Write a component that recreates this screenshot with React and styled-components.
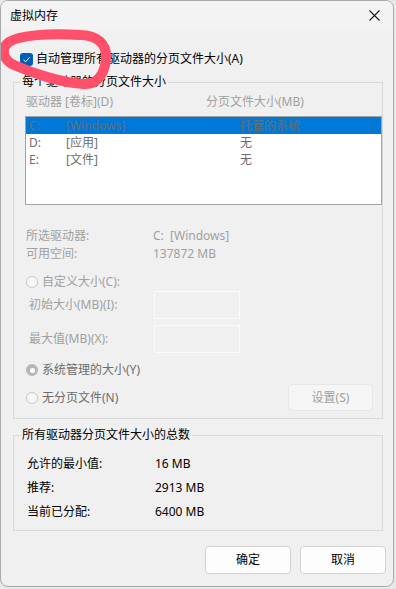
import React from "react";
import styled, { createGlobalStyle } from "styled-components";

const Global = createGlobalStyle`
  html, body { margin: 0; padding: 0; background: #e8e8e8; }
  body { font-family: "Noto Sans", "Noto Sans CJK SC", sans-serif; font-size: 12px; color: #000; }
  * { box-sizing: border-box; }
`;

const Window = styled.div`
  position: relative;
  width: 394px;
  height: 587px;
  background: #f0f0f0;
  border: 1px solid #a9a9a9;
  border-radius: 8px;
  overflow: hidden;
  display: flex;
  flex-direction: column;
`;

const TitleBar = styled.div`
  height: 30px;
  background: #f3f3f3;
  display: flex;
  align-items: center;
  justify-content: space-between;
  padding: 0 8px 0 9px;
  line-height: 16px;
`;

const CloseBtn = styled.div`
  width: 22px;
  height: 22px;
  display: flex;
  align-items: center;
  justify-content: center;
  margin-top: -2px;
`;

const Body = styled.div`
  padding: 0 10px 0 12px;
  display: flex;
  flex-direction: column;
`;

const CheckRow = styled.label`
  display: flex;
  align-items: center;
  height: 16px;
  line-height: 16px;
  margin-top: 20px;
  padding-left: 7px;
  gap: 3px;
`;

const CheckBox = styled.span`
  width: 13px;
  height: 13px;
  border-radius: 3px;
  background: #005fb8;
  display: flex;
  align-items: center;
  justify-content: center;
`;

const Group = styled.fieldset`
  margin: ${(p) => p.$mt}px 0 0 0;
  padding: 0;
  border: 1px solid #d9d9d9;
  min-width: 0;
`;

const Legend = styled.legend`
  margin-left: 6px;
  padding: 0 2px;
  line-height: 16px;
  color: #000;
`;

const Inner = styled.div`
  padding: ${(p) => p.$pad};
  display: flex;
  flex-direction: column;
`;

const Header = styled.div`
  display: flex;
  height: 16px;
  line-height: 16px;
  color: #a0a0a0;
  padding-left: 1px;
`;

const HeaderCell = styled.span`
  width: ${(p) => p.$w}px;
`;

const List = styled.div`
  margin-top: 6px;
  height: 89px;
  border: 1px solid #a3a3a3;
  background: #fff;
`;

const ListRow = styled.div`
  display: flex;
  height: 17px;
  line-height: 17px;
  color: #6d6d6d;
  background: ${(p) => (p.$sel ? "#0078d7" : "transparent")};
  padding-left: 3px;
`;

const Cell = styled.span`
  width: ${(p) => p.$w}px;
  flex: none;
`;

const InfoRow = styled.div`
  display: flex;
  height: 18px;
  line-height: 18px;
  color: #a0a0a0;
  margin-top: ${(p) => p.$mt || 0}px;
  padding-left: 1px;
`;

const InfoLabel = styled.span`
  width: 127px;
`;

const RadioRow = styled.div`
  display: flex;
  align-items: center;
  justify-content: space-between;
  min-height: 16px;
  margin-top: ${(p) => p.$mt}px;
  padding-right: ${(p) => p.$pr || 0}px;
`;

const RadioLabel = styled.span`
  display: flex;
  align-items: center;
  gap: 4px;
  line-height: 16px;
  color: ${(p) => (p.$dim ? "#a0a0a0" : "#6d6d6d")};
  padding-left: 1px;
`;

const RadioDot = styled.span`
  width: 12px;
  height: 12px;
  border-radius: 50%;
  border: 1px solid ${(p) => (p.$on ? "#b7b7b7" : "#c8c8c8")};
  background: ${(p) => (p.$on ? "#b7b7b7" : "#f7f7f7")};
  display: flex;
  align-items: center;
  justify-content: center;
  &::after {
    content: "";
    display: ${(p) => (p.$on ? "block" : "none")};
    width: 5px;
    height: 5px;
    border-radius: 50%;
    background: #fff;
  }
`;

const SizeRow = styled.div`
  display: flex;
  align-items: center;
  margin-top: ${(p) => p.$mt}px;
  color: #a0a0a0;
  padding-left: 4px;
  line-height: 16px;
`;

const SizeLabel = styled.span`
  width: 125px;
`;

const SizeBox = styled.div`
  width: 86px;
  height: 28px;
  border: 1px solid #fbfbfb;
  background: #f0f0f0;
`;

const Button = styled.button`
  width: ${(p) => p.$w || 86}px;
  height: ${(p) => p.$h || 28}px;
  border-radius: 4px;
  font-family: inherit;
  font-size: 12px;
  padding: 0;
  border: 1px solid ${(p) => (p.$disabled ? "#e6e6e6" : "#d2d2d2")};
  background: ${(p) => (p.$disabled ? "#f5f5f5" : "#fdfdfd")};
  color: ${(p) => (p.$disabled ? "#a0a0a0" : "#000")};
  line-height: 16px;
`;

const TotalRow = styled.div`
  display: flex;
  height: 24px;
  line-height: 24px;
  color: #000;
`;

const TotalLabel = styled.span`
  width: 128px;
`;

const Footer = styled.div`
  display: flex;
  justify-content: flex-end;
  gap: 9px;
  margin-top: 15px;
  padding-right: 7px;
`;

const Annotation = styled.svg`
  position: absolute;
  left: -1px;
  top: -1px;
  pointer-events: none;
`;

export default function App() {
  return (
    <>
      <Global />
      <Window>
        <TitleBar>
          <span>虚拟内存</span>
          <CloseBtn>
            <svg width="11" height="11" viewBox="0 0 11 11">
              <path d="M0.5 0.5 L10.5 10.5 M10.5 0.5 L0.5 10.5" stroke="#1a1a1a" strokeWidth="1.1" />
            </svg>
          </CloseBtn>
        </TitleBar>
        <Body>
          <CheckRow>
            <CheckBox>
              <svg width="9" height="9" viewBox="0 0 9 9">
                <path d="M1.5 4.8 L3.6 6.8 L7.6 2.3" stroke="#fff" strokeWidth="1" fill="none" />
              </svg>
            </CheckBox>
            <span>自动管理所有驱动器的分页文件大小(A)</span>
          </CheckRow>

          <Group $mt={7}>
            <Legend>每个驱动器的分页文件大小</Legend>
            <Inner $pad="4px 0 7px 11px">
              <Header>
                <HeaderCell $w={180}>驱动器 [卷标](D)</HeaderCell>
                <HeaderCell $w={150}>分页文件大小(MB)</HeaderCell>
              </Header>
              <List>
                <ListRow $sel>
                  <Cell $w={37}>C:</Cell>
                  <Cell $w={174}>[Windows]</Cell>
                  <Cell $w={120}>托管的系统</Cell>
                </ListRow>
                <ListRow>
                  <Cell $w={37}>D:</Cell>
                  <Cell $w={174}>[应用]</Cell>
                  <Cell $w={120}>无</Cell>
                </ListRow>
                <ListRow>
                  <Cell $w={37}>E:</Cell>
                  <Cell $w={174}>[文件]</Cell>
                  <Cell $w={120}>无</Cell>
                </ListRow>
              </List>
              <InfoRow $mt={22}>
                <InfoLabel>所选驱动器:</InfoLabel>
                <span>C:&nbsp;&nbsp;[Windows]</span>
              </InfoRow>
              <InfoRow>
                <InfoLabel>可用空间:</InfoLabel>
                <span>137872 MB</span>
              </InfoRow>
              <RadioRow $mt={11}>
                <RadioLabel $dim>
                  <RadioDot />
                  自定义大小(C):
                </RadioLabel>
              </RadioRow>
              <SizeRow $mt={1}>
                <SizeLabel>初始大小(MB)(I):</SizeLabel>
                <SizeBox />
              </SizeRow>
              <SizeRow $mt={6}>
                <SizeLabel>最大值(MB)(X):</SizeLabel>
                <SizeBox />
              </SizeRow>
              <RadioRow $mt={9}>
                <RadioLabel>
                  <RadioDot $on />
                  系统管理的大小(Y)
                </RadioLabel>
              </RadioRow>
              <RadioRow $mt={6} $pr={9}>
                <RadioLabel>
                  <RadioDot />
                  无分页文件(N)
                </RadioLabel>
                <Button $disabled $w={85} $h={27}>设置(S)</Button>
              </RadioRow>
            </Inner>
          </Group>

          <Group $mt={8}>
            <Legend>所有驱动器分页文件大小的总数</Legend>
            <Inner $pad="9px 0 6px 13px">
              <TotalRow>
                <TotalLabel>允许的最小值:</TotalLabel>
                <span>16 MB</span>
              </TotalRow>
              <TotalRow>
                <TotalLabel>推荐:</TotalLabel>
                <span>2913 MB</span>
              </TotalRow>
              <TotalRow>
                <TotalLabel>当前已分配:</TotalLabel>
                <span>6400 MB</span>
              </TotalRow>
            </Inner>
          </Group>
        </Body>
        <Footer>
          <Button>确定</Button>
          <Button>取消</Button>
        </Footer>
        <Annotation width="120" height="95" viewBox="0 0 120 95">
          <path
            d="M80 35 C97 35, 107 44, 106 58 C105 74, 97 85, 84 84 C62 83, 32 73, 14 65 C2 59, 1 48, 9 42 C20 35, 50 33, 80 35"
            stroke="#ff4f6b"
            strokeWidth="10"
            fill="none"
            strokeLinecap="round"
            strokeLinejoin="round"
          />
        </Annotation>
      </Window>
    </>
  );
}
